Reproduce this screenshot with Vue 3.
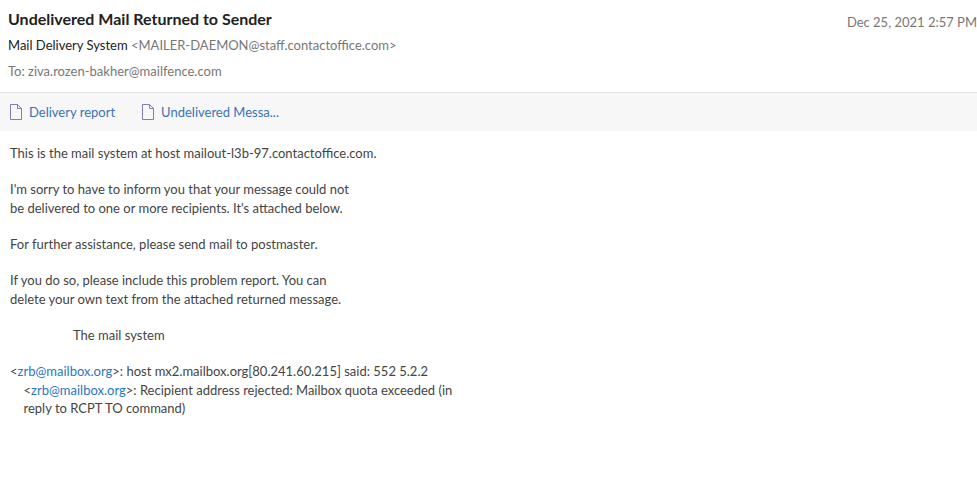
<script setup>
const attachments = ['Delivery report', 'Undelivered Messa...']
</script>

<template>
  <div class="mail">
    <header class="head">
      <div class="info">
        <h1 class="subject">Undelivered Mail Returned to Sender</h1>
        <p class="from">Mail Delivery System <span class="addr">&lt;MAILER-DAEMON@staff.contactoffice.com&gt;</span></p>
        <p class="to">To: ziva.rozen-bakher@mailfence.com</p>
      </div>
      <div class="date">Dec 25, 2021 2:57 PM</div>
    </header>

    <div class="attachments">
      <a class="att" v-for="name in attachments" :key="name">
        <svg width="14" height="16" viewBox="0 0 14 16" fill="none">
          <path d="M1.5 .5H8.5L12.5 4.5V15.5H1.5Z M8.5 .5V4.5H12.5" stroke="#7d7fb5" stroke-width="1" />
        </svg>
        <span>{{ name }}</span>
      </a>
    </div>

    <div class="body">
      <p>This is the mail system at host mailout-l3b-97.contactoffice.com.</p>
      <p>I'm sorry to have to inform you that your message could not<br>be delivered to one or more recipients. It's attached below.</p>
      <p>For further assistance, please send mail to postmaster.</p>
      <p>If you do so, please include this problem report. You can<br>delete your own text from the attached returned message.</p>
      <p class="sign">The mail system</p>
      <p>&lt;<a>zrb@mailbox.org</a>&gt;: host mx2.mailbox.org[80.241.60.215] said: 552 5.2.2</p>
      <p class="detail">&lt;<a>zrb@mailbox.org</a>&gt;: Recipient address rejected: Mailbox quota exceeded (in<br>reply to RCPT TO command)</p>
    </div>
  </div>
</template>

<style>
body {
  margin: 0;
  background: #fff;
}
</style>

<style scoped>
.mail {
  font-family: Lato, sans-serif;
  font-size: 13px;
  line-height: 18.2px;
  color: #444;
}

.head {
  display: flex;
  justify-content: space-between;
  padding: 8px 0 0 8px;
  height: 84px;
  border-bottom: 1px solid #e3e3e3;
}

.subject {
  margin: 0 0 7px;
  font-size: 16px;
  font-weight: 700;
  line-height: 21px;
  color: #222;
}

.from {
  margin: 0 0 8px;
  color: #222;
}

.addr,
.to {
  color: #777;
}

.to {
  margin: 0;
}

.date {
  padding: 5px 0 0;
  color: #777;
  white-space: nowrap;
}

.attachments {
  display: flex;
  gap: 26px;
  align-items: center;
  height: 38px;
  padding-left: 9px;
  background: #f7f7f7;
}

.att {
  display: flex;
  align-items: center;
  gap: 6px;
  color: #3a73b5;
}

.body {
  padding: 13px 10px;
}

.body p {
  margin: 0 0 18.2px;
}

.body a {
  color: #2a76c6;
}

.body .sign {
  padding-left: 63px;
}

.body .detail {
  margin: -18.2px 0 0;
  padding-left: 13.5px;
  max-width: 450px;
}
</style>
